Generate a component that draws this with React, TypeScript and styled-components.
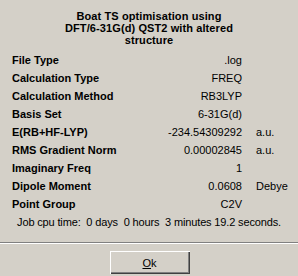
import styled, { createGlobalStyle } from 'styled-components';

const GlobalStyle = createGlobalStyle`
	html, body {
		margin: 0;
		padding: 0;
		background: #d4d0c8;
		overflow: hidden;
	}
`;

type RowType = {
	label: string;
	value: string;
	unit?: string;
};

const rows: RowType[] = [
	{ label: 'File Type', value: '.log' },
	{ label: 'Calculation Type', value: 'FREQ' },
	{ label: 'Calculation Method', value: 'RB3LYP' },
	{ label: 'Basis Set', value: '6-31G(d)' },
	{ label: 'E(RB+HF-LYP)', value: '-234.54309292', unit: 'a.u.' },
	{ label: 'RMS Gradient Norm', value: '0.00002845', unit: 'a.u.' },
	{ label: 'Imaginary Freq', value: '1' },
	{ label: 'Dipole Moment', value: '0.0608', unit: 'Debye' },
	{ label: 'Point Group', value: 'C2V' },
];

export default function App() {
	return (
		<>
			<GlobalStyle />
			<Dialog>
				<Title>
					Boat TS optimisation using
					<br />
					DFT/6-31G(d) QST2 with altered
					<br />
					structure
				</Title>

				<InfoGrid>
					{rows.map((r) => (
						<Row key={r.label}>
							<Label>{r.label}</Label>
							<Value>{r.value}</Value>
							<Unit>{r.unit || ''}</Unit>
						</Row>
					))}
				</InfoGrid>

				<CpuTime>
					Job cpu time:&nbsp; 0 days&nbsp; 0 hours&nbsp; 3 minutes 19.2
					seconds.
				</CpuTime>

				<Separator />

				<ButtonBar>
					<OkButton type="button">
						<u>O</u>k
					</OkButton>
				</ButtonBar>
			</Dialog>
		</>
	);
}

const Dialog = styled.div`
	width: 298px;
	height: 276px;
	background: #d4d0c8;
	color: #000;
	font-family: 'Liberation Sans', Arial, sans-serif;
	font-size: 11px;
	display: flex;
	flex-direction: column;
	overflow: hidden;
`;

const Title = styled.div`
	padding-top: 10px;
	text-align: center;
	font-weight: bold;
	line-height: 12px;
	letter-spacing: 0.1px;
`;

const InfoGrid = styled.div`
	margin-top: 5px;
	padding-left: 12px;
	display: flex;
	flex-direction: column;
`;

const Row = styled.div`
	display: grid;
	grid-template-columns: 1fr 96px 42px;
	column-gap: 14px;
	height: 18px;
	line-height: 18px;
	white-space: nowrap;
`;

const Label = styled.span`
	font-weight: bold;
`;

const Value = styled.span`
	text-align: right;
`;

const Unit = styled.span``;

const CpuTime = styled.div`
	height: 18px;
	line-height: 18px;
	text-align: center;
	white-space: nowrap;
	letter-spacing: -0.15px;
`;

const Separator = styled.div`
	margin-top: 11px;
	height: 0;
	border-top: 1px solid #808080;
	border-bottom: 1px solid #fff;
`;

const ButtonBar = styled.div`
	display: flex;
	justify-content: center;
	padding-top: 7px;
`;

const OkButton = styled.button`
	width: 80px;
	height: 23px;
	margin-left: 1px;
	padding: 0;
	background: #d4d0c8;
	border: none;
	box-shadow:
		inset 1px 1px 0 #fff,
		inset -1px -1px 0 #404040,
		inset -2px -2px 0 #808080;
	font-family: 'Liberation Sans', Arial, sans-serif;
	font-size: 11px;
	color: #000;
`;
